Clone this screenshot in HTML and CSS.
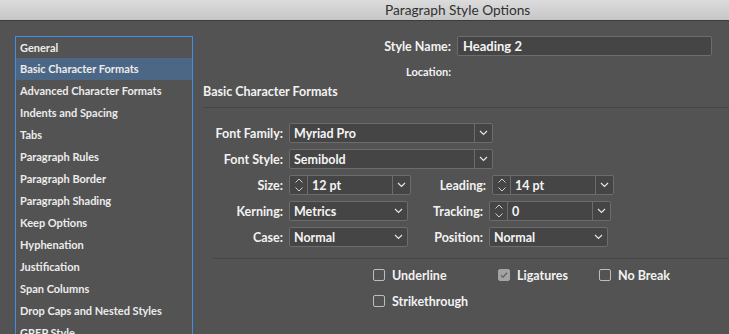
FILE: index.html
```html
<!DOCTYPE html>
<html lang="en">
<head>
    <meta charset="UTF-8">
    <meta name="viewport" content="width=device-width, initial-scale=1.0">
    <title>Paragraph Style Options</title>
    <link rel="stylesheet" href="styles.css">
</head>
<body>
    <div class="titlebar">Paragraph Style Options</div>

    <div class="dialog">
        <ul class="sections">
            <li>General</li>
            <li class="selected">Basic Character Formats</li>
            <li>Advanced Character Formats</li>
            <li>Indents and Spacing</li>
            <li>Tabs</li>
            <li>Paragraph Rules</li>
            <li>Paragraph Border</li>
            <li>Paragraph Shading</li>
            <li>Keep Options</li>
            <li>Hyphenation</li>
            <li>Justification</li>
            <li>Span Columns</li>
            <li>Drop Caps and Nested Styles</li>
            <li>GREP Style</li>
        </ul>

        <div class="panel">
            <div class="style-name">
                <label class="name-label">Style Name:</label>
                <div class="field name-field">Heading 2</div>
            </div>
            <div class="location">
                <label class="name-label">Location:</label>
            </div>

            <h2 class="panel-title">Basic Character Formats</h2>

            <div class="form">
                <div class="row">
                    <label class="label">Font Family:</label>
                    <div class="field select wide">
                        <span class="value">Myriad Pro</span>
                        <span class="arrow"><svg width="9" height="6" viewBox="0 0 9 6"><path d="M1 1l3.5 3.5L8 1" fill="none" stroke="#e6e6e6" stroke-width="1.2"/></svg></span>
                    </div>
                </div>
                <div class="row">
                    <label class="label">Font Style:</label>
                    <div class="field select wide">
                        <span class="value">Semibold</span>
                        <span class="arrow"><svg width="9" height="6" viewBox="0 0 9 6"><path d="M1 1l3.5 3.5L8 1" fill="none" stroke="#e6e6e6" stroke-width="1.2"/></svg></span>
                    </div>
                </div>
                <div class="row">
                    <label class="label">Size:</label>
                    <div class="field combo">
                        <span class="spin"><svg width="10" height="16" viewBox="0 0 10 16"><path d="M1.5 5.5L5 2l3.5 3.5M1.5 10.5L5 14l3.5-3.5" fill="none" stroke="#cfcfcf" stroke-width="1"/></svg></span>
                        <span class="value">12 pt</span>
                        <span class="arrow"><svg width="9" height="6" viewBox="0 0 9 6"><path d="M1 1l3.5 3.5L8 1" fill="none" stroke="#e6e6e6" stroke-width="1.2"/></svg></span>
                    </div>
                    <label class="label second">Leading:</label>
                    <div class="field combo">
                        <span class="spin"><svg width="10" height="16" viewBox="0 0 10 16"><path d="M1.5 5.5L5 2l3.5 3.5M1.5 10.5L5 14l3.5-3.5" fill="none" stroke="#cfcfcf" stroke-width="1"/></svg></span>
                        <span class="value">14 pt</span>
                        <span class="arrow"><svg width="9" height="6" viewBox="0 0 9 6"><path d="M1 1l3.5 3.5L8 1" fill="none" stroke="#e6e6e6" stroke-width="1.2"/></svg></span>
                    </div>
                </div>
                <div class="row">
                    <label class="label">Kerning:</label>
                    <div class="field select narrow">
                        <span class="value">Metrics</span>
                        <span class="chev"><svg width="9" height="6" viewBox="0 0 9 6"><path d="M1 1l3.5 3.5L8 1" fill="none" stroke="#e6e6e6" stroke-width="1.2"/></svg></span>
                    </div>
                    <label class="label second">Tracking:</label>
                    <div class="field combo">
                        <span class="spin"><svg width="10" height="16" viewBox="0 0 10 16"><path d="M1.5 5.5L5 2l3.5 3.5M1.5 10.5L5 14l3.5-3.5" fill="none" stroke="#cfcfcf" stroke-width="1"/></svg></span>
                        <span class="value">0</span>
                        <span class="arrow"><svg width="9" height="6" viewBox="0 0 9 6"><path d="M1 1l3.5 3.5L8 1" fill="none" stroke="#e6e6e6" stroke-width="1.2"/></svg></span>
                    </div>
                </div>
                <div class="row">
                    <label class="label">Case:</label>
                    <div class="field select narrow">
                        <span class="value">Normal</span>
                        <span class="chev"><svg width="9" height="6" viewBox="0 0 9 6"><path d="M1 1l3.5 3.5L8 1" fill="none" stroke="#e6e6e6" stroke-width="1.2"/></svg></span>
                    </div>
                    <label class="label second">Position:</label>
                    <div class="field select narrow">
                        <span class="value">Normal</span>
                        <span class="chev"><svg width="9" height="6" viewBox="0 0 9 6"><path d="M1 1l3.5 3.5L8 1" fill="none" stroke="#e6e6e6" stroke-width="1.2"/></svg></span>
                    </div>
                </div>
            </div>

            <div class="options">
                <label class="check"><span class="box"></span>Underline</label>
                <label class="check"><span class="box checked"><svg width="10" height="10" viewBox="0 0 10 10"><path d="M2 5.2l2 2 4-4.4" fill="none" stroke="#666" stroke-width="1.4"/></svg></span>Ligatures</label>
                <label class="check"><span class="box"></span>No Break</label>
                <label class="check"><span class="box"></span>Strikethrough</label>
            </div>
        </div>
    </div>
</body>
</html>
```

FILE: styles.css
```css
body {
    margin: 0;
    width: 729px;
    height: 334px;
    overflow: hidden;
    background-color: #535353;
    font-family: "Lato", "Liberation Sans", sans-serif;
    color: #f2f2f2;
}

.titlebar {
    height: 20px;
    background: linear-gradient(#dcdcdc, #c6c6c6);
    border-bottom: 1px solid #3c3c3c;
    color: #303030;
    font-size: 13.7px;
    line-height: 20px;
    padding-left: 385px;
}

.dialog {
    display: flex;
    padding-top: 15px;
}

.sections {
    list-style: none;
    margin: 0 0 0 15px;
    padding: 0;
    width: 176px;
    height: 310px;
    overflow: hidden;
    border: 1px solid #3d8fe6;
    flex-shrink: 0;
}

.sections li {
    height: 22px;
    line-height: 22px;
    padding-left: 4px;
    font-size: 11px;
    font-weight: bold;
    color: #ececec;
    white-space: nowrap;
}

.sections li:first-child {
    height: 21px;
    line-height: 21px;
}

.sections .selected {
    background-color: #4b6785;
}

.panel {
    flex: 1;
    margin-left: 10px;
}

.style-name {
    display: flex;
    align-items: center;
    height: 20px;
}

.name-label {
    width: 248px;
    text-align: right;
    margin-right: 6px;
    font-size: 12.5px;
    font-weight: bold;
}

.location .name-label {
    font-size: 11px;
}

.location {
    display: flex;
    align-items: center;
    height: 20px;
    margin-top: 5px;
}

.field {
    height: 18px;
    background-color: #454545;
    border: 1px solid #6c6c6c;
    border-radius: 2px;
    display: flex;
    align-items: center;
    font-size: 12.5px;
    font-weight: bold;
    color: #f4f4f4;
}

.name-field {
    width: 248px;
    padding-left: 5px;
    font-size: 13px;
}

.panel-title {
    margin: 0;
    font-size: 12.5px;
    font-weight: bold;
    height: 26px;
    line-height: 22px;
    border-bottom: 1px solid #474747;
}

.form {
    margin-left: 10px;
    padding: 15px 0 11px 0;
    border-bottom: 1px solid #474747;
    display: flex;
    flex-direction: column;
    gap: 6px;
}

.row {
    display: flex;
    align-items: center;
    height: 20px;
}

.label {
    width: 70px;
    text-align: right;
    margin-right: 6px;
    font-size: 12.5px;
    font-weight: bold;
}

.label.second {
    width: 75px;
}

.value {
    flex: 1;
    padding-left: 4px;
    white-space: nowrap;
}

.wide {
    width: 202px;
}

.narrow {
    width: 117px;
}

.combo {
    width: 120px;
}

.arrow {
    width: 17px;
    height: 18px;
    border-left: 1px solid #6c6c6c;
    display: flex;
    align-items: center;
    justify-content: center;
}

.chev {
    width: 18px;
    display: flex;
    align-items: center;
    justify-content: center;
}

.spin {
    width: 17px;
    height: 18px;
    border-right: 1px solid #6c6c6c;
    display: flex;
    align-items: center;
    justify-content: center;
}

.options {
    display: grid;
    grid-template-columns: 125px 101px auto;
    row-gap: 10px;
    padding: 8px 0 0 170px;
}

.check {
    display: flex;
    align-items: center;
    gap: 7px;
    height: 16px;
    font-size: 12.5px;
    font-weight: bold;
}

.box {
    width: 10px;
    height: 10px;
    border: 1px solid #bdbdbd;
    border-radius: 2px;
    display: flex;
    align-items: center;
    justify-content: center;
}

.box.checked {
    background-color: #a3a3a3;
    border-color: #a3a3a3;
}
```
